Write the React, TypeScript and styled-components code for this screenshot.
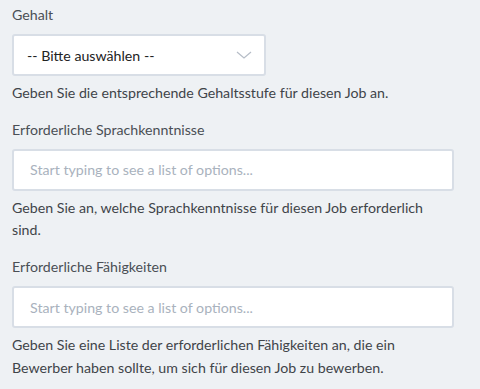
import React from 'react'
import styled, { createGlobalStyle } from 'styled-components'

const GlobalStyle = createGlobalStyle`
  html, body {
    margin: 0;
    padding: 0;
    background: #eef1f4;
  }
  body {
    font-family: Lato, "Liberation Sans", sans-serif;
    font-size: 14.2px;
  }
`

const Form = styled.div`
  display: flex;
  flex-direction: column;
  gap: 14px;
  width: 442px;
  padding: 4px 0 0 12px;
`

const Field = styled.div`
  display: flex;
  flex-direction: column;
`

const Label = styled.label`
  color: #4a4f55;
  line-height: 22px;
  margin-bottom: 8px;
`

const Box = styled.div<{ $width?: string }>`
  box-sizing: border-box;
  width: ${({ $width }) => $width || '100%'};
  height: 42px;
  background: #fff;
  border: 2px solid #d8dee6;
  border-radius: 3px;
  display: flex;
  align-items: center;
  justify-content: space-between;
`

const SelectText = styled.span`
  color: #222;
  padding-left: 13px;
`

const Placeholder = styled.span`
  color: #a9b2bd;
  padding-left: 16px;
`

const Chevron = styled.svg`
  margin-right: 12px;
`

const Hint = styled.p`
  margin: 6px 0 0;
  color: #3f4449;
  line-height: 22.7px;
`

const fields = [
  {
    label: 'Erforderliche Sprachkenntnisse',
    hint: 'Geben Sie an, welche Sprachkenntnisse für diesen Job erforderlich sind.',
  },
  {
    label: 'Erforderliche Fähigkeiten',
    hint: 'Geben Sie eine Liste der erforderlichen Fähigkeiten an, die ein Bewerber haben sollte, um sich für diesen Job zu bewerben.',
  },
]

export default function App() {
  return (
    <>
      <GlobalStyle />
      <Form>
        <Field>
          <Label>Gehalt</Label>
          <Box $width="254px">
            <SelectText>-- Bitte auswählen --</SelectText>
            <Chevron width="16" height="8" viewBox="0 0 16 8">
              <path d="M1 1l7 6 7-6" fill="none" stroke="#b6bdc7" strokeWidth="1.2" />
            </Chevron>
          </Box>
          <Hint>Geben Sie die entsprechende Gehaltsstufe für diesen Job an.</Hint>
        </Field>
        {fields.map((f) => (
          <Field key={f.label}>
            <Label>{f.label}</Label>
            <Box>
              <Placeholder>Start typing to see a list of options...</Placeholder>
            </Box>
            <Hint>{f.hint}</Hint>
          </Field>
        ))}
      </Form>
    </>
  )
}
